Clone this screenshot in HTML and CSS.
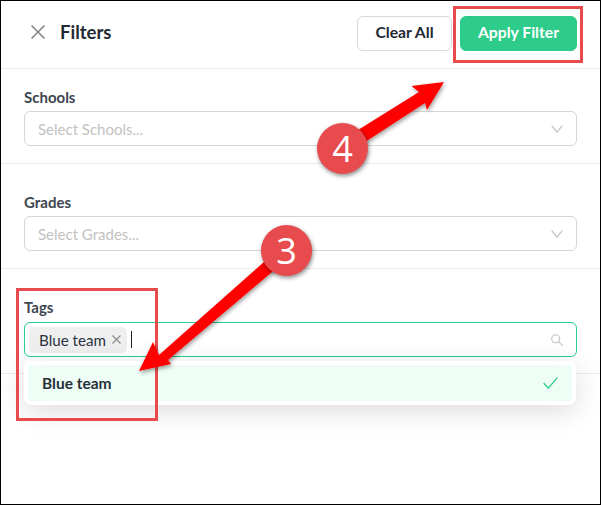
FILE: index.html
```html
<!DOCTYPE html>
<html lang="en">
<head>
<meta charset="utf-8">
<title>Filters</title>
<link rel="stylesheet" href="styles.css">
</head>
<body>
<div class="frame">
  <header class="header">
    <div class="title-group">
      <svg class="close" width="14" height="14" viewBox="0 0 14 14"><path d="M.5.5l13 13M13.500.5l-13 13"/></svg>
      <h1 class="title">Filters</h1>
    </div>
    <div class="actions">
      <button class="btn btn-clear">Clear All</button>
      <button class="btn btn-apply">Apply Filter</button>
    </div>
  </header>
  <section class="section section-first">
    <div class="label">Schools</div>
    <div class="select"><span class="placeholder">Select Schools...</span>
      <svg class="chev" width="12" height="8" viewBox="0 0 12 8"><path d="M.7.7L6 7.2 11.3.7"/></svg></div>
  </section>
  <section class="section">
    <div class="label">Grades</div>
    <div class="select"><span class="placeholder">Select Grades...</span>
      <svg class="chev" width="12" height="8" viewBox="0 0 12 8"><path d="M.7.7L6 7.2 11.3.7"/></svg></div>
  </section>
  <section class="section section-tags">
    <div class="label label-tags">Tags</div>
    <div class="select select-active">
      <span class="chip">Blue team<svg class="chip-x" width="9" height="9" viewBox="0 0 9 9"><path d="M.5.5l8 8M8.5.5l-8 8"/></svg></span>
      <span class="caret"></span>
      <svg class="search" width="12" height="12" viewBox="0 0 12 12"><circle cx="4.700" cy="4.700" r="4"/><path d="M7.600 7.600l4 4"/></svg>
    </div>
    <div class="menu">
      <div class="option"><span>Blue team</span>
        <svg class="check" width="15" height="12" viewBox="0 0 15 12"><path d="M.7 6l4.600 5.200L14.300.6"/></svg></div>
    </div>
  </section>

  <div class="mark mark-apply"></div>
  <div class="mark mark-tags"></div>
  <svg class="arrows" width="601" height="505" viewBox="0 0 601 505">
    <defs><filter id="sh" x="-20%" y="-20%" width="140%" height="140%"><feDropShadow dx="1" dy="2" stdDeviation="2" flood-color="#000" flood-opacity=".4"/></filter></defs>
    <g fill="#f00" filter="url(#sh)">
      <path d="M350 135L419 92 411.500 86 444 82 427 110 425 103 362 144Z"/>
      <path d="M159 355L153 342 139 371 171 364 168 360 298 250 282 246Z"/>
    </g>
  </svg>
  <div class="badge badge-3">3</div>
  <div class="badge badge-4">4</div>
</div>
</body>
</html>
```
FILE: styles.css
```css
* { box-sizing: border-box; }
html, body { margin: 0; padding: 0; }
body { font-family: Lato, "Liberation Sans", sans-serif; background: #fff; }
.frame {
  position: relative;
  width: 601px;
  height: 505px;
  border: 1px solid #000;
  overflow: hidden;
  background: #fff;
}
.header {
  height: 68px;
  border-bottom: 1px solid #ebebeb;
  display: flex;
  justify-content: space-between;
  align-items: flex-start;
  padding: 15px 23px 0 30px;
}
.title-group { display: flex; align-items: center; gap: 15px; height: 32px; }
.close { fill: none; stroke: #808080; stroke-width: 1.5; }
.title { margin: 0; font-size: 18.500px; font-weight: 700; color: #1f2933; line-height: 32px; }
.actions { display: flex; gap: 8px; }
.btn {
  height: 35px;
  border-radius: 6px;
  font: 700 15.700px/31px Lato, sans-serif;
  padding: 0 0 2px;
}
.btn-clear { width: 95px; background: #fff; border: 1px solid #d9d9d9; color: #1f2933; }
.btn-apply { width: 117px; background: #2ecc8a; border: 1px solid #2ecc8a; color: #fff; }
.section {
  height: 105px;
  padding: 29px 23px 0;
  border-bottom: 1px solid #ebebeb;
}
.section-first { height: 95px; padding-top: 19px; }
.section-tags { position: relative; }
.label {
  font-size: 15px;
  font-weight: 700;
  color: #3d4550;
  line-height: 18px;
  margin-bottom: 5px;
}
.label-tags { margin-bottom: 6px; }
.select {
  height: 35px;
  border: 1px solid #d6d6d6;
  border-radius: 6px;
  display: flex;
  align-items: center;
  padding: 0 13px 0 13px;
  background: #fff;
}
.placeholder { font-size: 15px; color: #c2c2c2; flex: 1; }
.chev { fill: none; stroke: #c0c0c0; stroke-width: 1.100; }
.select-active { border-color: #27cf8c; padding-left: 4px; }
.chip {
  display: flex;
  align-items: center;
  gap: 6px;
  height: 26px;
  width: 98px;
  padding-left: 10px;
  background: #efefef;
  border-radius: 5px;
  font-size: 15.200px;
  color: #2b3440;
}
.chip-x { fill: none; stroke: #8a8a8a; stroke-width: 1.100; }
.caret { width: 1px; height: 17px; background: #222; margin-left: 4px; }
.search { margin-left: auto; fill: none; stroke: #c4c4c4; stroke-width: 1.100; }
.menu {
  position: absolute;
  top: 92px;
  left: 23px;
  width: 552px;
  height: 44px;
  padding: 4px;
  background: #fff;
  border-radius: 7px;
  box-shadow: 0 6px 28px rgba(0, 0, 0, .14);
}
.option {
  height: 36px;
  background: #eefdf5;
  border-radius: 4px;
  padding: 0 14px 0 14px;
  display: flex;
  align-items: center;
  justify-content: space-between;
  font-size: 15.500px;
  font-weight: 700;
  color: #26303a;
}
.check { fill: none; stroke: #2ecc8a; stroke-width: 1.300; }
.mark { position: absolute; border: 3px solid #e84b4b; }
.mark-apply { left: 452px; top: 5px; width: 130px; height: 57px; }
.mark-tags { left: 15px; top: 287px; width: 142px; height: 133px; }
.arrows { position: absolute; left: -1px; top: -1px; }
.badge {
  position: absolute;
  width: 51px;
  height: 51px;
  border-radius: 50%;
  background: #e84b4e;
  color: #fff;
  font: 400 36px/51px "Open Sans", sans-serif;
  text-align: center;
  box-shadow: 1px 2px 4px rgba(0, 0, 0, .45);
}
.badge-3 { left: 260px; top: 224px; }
.badge-4 { left: 316px; top: 122px; }
```
